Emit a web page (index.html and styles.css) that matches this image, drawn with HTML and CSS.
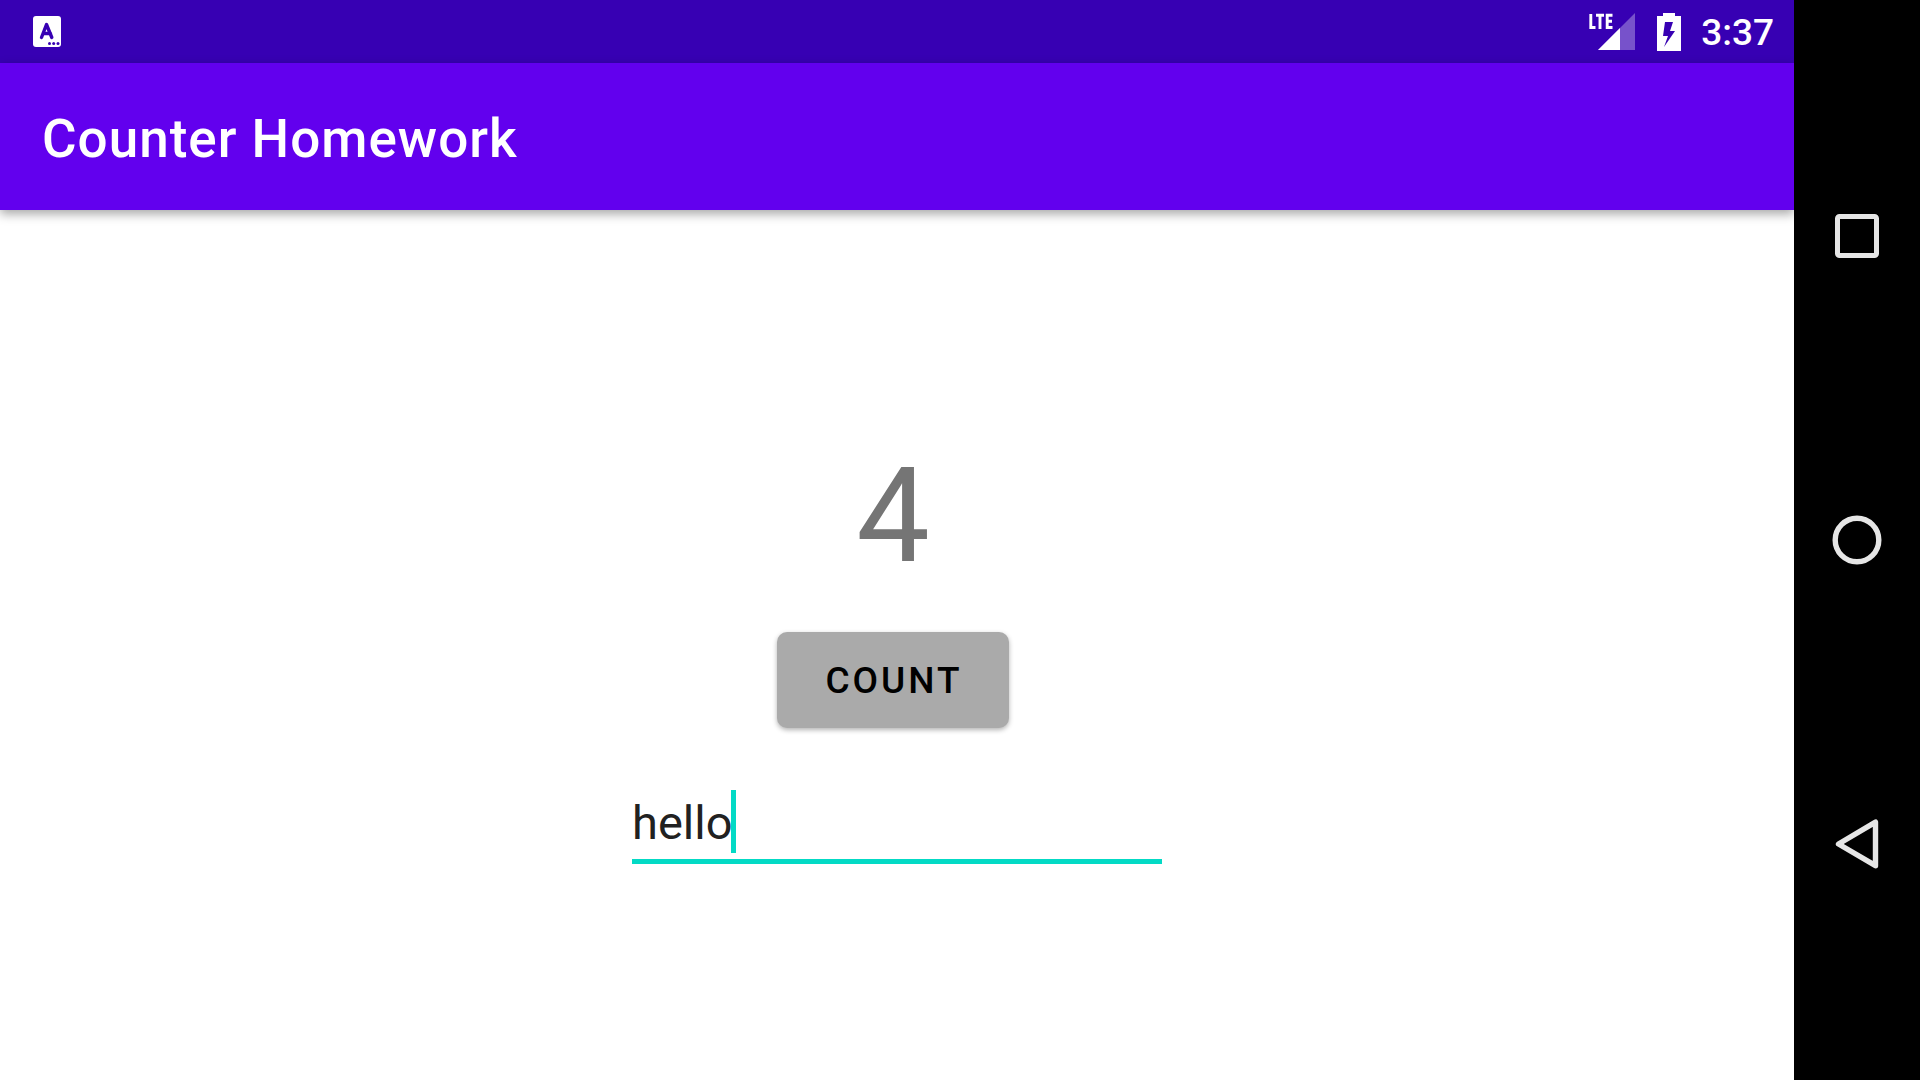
FILE: index.html
```
<!DOCTYPE html>
<html lang="en">
<head>
<meta charset="utf-8">
<title>Counter Homework</title>
<link rel="stylesheet" href="styles.css">
</head>
<body>
<div class="app">
  <div class="status-bar">
    <svg class="notification" width="30" height="32" viewBox="0 0 30 32" aria-hidden="true">
      <rect x="1" y="0" width="28" height="31" rx="3" fill="#fff"/>
      <path d="M9.500 21.500 14.500 8.500 19.800 21.500M11 17.500h7.500" fill="none" stroke="#3700b3" stroke-width="3.400" stroke-linecap="round" stroke-linejoin="round"/>
      <g fill="#3700b3"><circle cx="17.500" cy="27.500" r="1.500"/><circle cx="21.700" cy="27.500" r="1.500"/><circle cx="26" cy="27.500" r="1.500"/></g>
    </svg>
    <div class="indicators">
      <svg width="48" height="38" viewBox="0 0 48 38" role="img" aria-label="LTE signal">
        <path d="M46 0V37H9Z" fill="#fff" opacity=".32"/>
        <path d="M31 15V37H9Z" fill="#fff"/>
        <path d="M1.800 1V14.500H6.500M7 2.300H15M11 2.300V16M23.500 2.300H18.200V14.500H23.500M18.200 8.200H23" fill="none" stroke="#fff" stroke-width="2.900"/>
      </svg>
      <svg width="24" height="38" viewBox="0 0 24 38" role="img" aria-label="Battery charging">
        <path fill="#fff" fill-rule="evenodd" d="M6 0H18V3H24V38H0V3H6ZM8 9 6 23H11L7 34 18 18H13L16 9Z"/>
      </svg>
      <span class="clock">3:37</span>
    </div>
  </div>
  <header class="app-bar"><h1 class="title">Counter Homework</h1></header>
  <main class="content">
    <div class="counter">
      <output class="value" for="count">4</output>
      <button class="count" id="count" type="button">COUNT</button>
    </div>
    <div class="field">
      <input class="text" type="text" value="hello" aria-label="Message">
      <span class="caret"></span>
    </div>
  </main>
</div>
<nav class="nav-bar" aria-label="System navigation">
  <button class="nav-button" type="button" aria-label="Recent apps">
    <svg width="50" height="50" viewBox="0 0 50 50"><rect x="5.500" y="5.500" width="39" height="39" rx="2" fill="none" stroke="#e6e6e6" stroke-width="5"/></svg>
  </button>
  <button class="nav-button" type="button" aria-label="Home">
    <svg width="50" height="50" viewBox="0 0 50 50"><circle cx="25" cy="25" r="21.800" fill="none" stroke="#e6e6e6" stroke-width="5.400"/></svg>
  </button>
  <button class="nav-button" type="button" aria-label="Back">
    <svg width="50" height="50" viewBox="0 0 50 50"><path d="M43.500 3.200V46.700L6.500 25Z" fill="none" stroke="#e6e6e6" stroke-width="5.400" stroke-linejoin="round"/></svg>
  </button>
</nav>
</body>
</html>
```
FILE: styles.css
```
* {
  box-sizing: border-box;
}

body {
  margin: 0;
  min-height: 100vh;
  display: flex;
  background: #fff;
  font-family: Roboto, sans-serif;
}

button,
input {
  margin: 0;
  border: 0;
  font-family: inherit;
}

svg {
  display: block;
}

.app {
  flex: 1;
  display: flex;
  flex-direction: column;
}

.status-bar {
  display: flex;
  justify-content: space-between;
  align-items: center;
  height: 63px;
  padding: 0 20px 0 32px;
  background: #3700b3;
  color: #fff;
}

.indicators {
  display: flex;
  align-items: center;
  gap: 20px;
}

.clock {
  padding-top: 2px;
  font-size: 37px;
  line-height: 44px;
  font-weight: 500;
}

.app-bar {
  display: flex;
  align-items: center;
  height: 147px;
  padding: 4px 42px 0;
  background: #6200ee;
  box-shadow: 0 4px 10px rgba(0, 0, 0, 0.35);
  color: #fff;
}

.title {
  margin: 0;
  font-size: 53px;
  line-height: 64px;
  font-weight: 500;
  letter-spacing: 1px;
}

.content {
  flex: 1;
  display: flex;
  flex-direction: column;
  align-items: center;
  justify-content: center;
  gap: 48px;
  padding-top: 2px;
}

.counter {
  display: flex;
  flex-direction: column;
  align-items: center;
  gap: 28px;
  padding-right: 8px;
}

.value {
  font-size: 131px;
  line-height: 176px;
  color: #757575;
}

.count {
  height: 96px;
  padding: 0 46px 0 48px;
  border-radius: 10px;
  background: #aaa;
  box-shadow: 0 2px 5px rgba(0, 0, 0, 0.3);
  color: #000;
  font-size: 37px;
  font-weight: 500;
  letter-spacing: 3px;
}

.field {
  position: relative;
  width: 530px;
}

.text {
  display: block;
  width: 100%;
  height: 88px;
  padding: 10px 0 0;
  border-bottom: 5px solid #03dac5;
  background: none;
  color: #212121;
  font-size: 47px;
  outline: 0;
}

.caret {
  position: absolute;
  left: 99px;
  bottom: 11px;
  width: 5px;
  height: 63px;
  background: #03dac5;
}

.nav-bar {
  display: flex;
  flex-direction: column;
  justify-content: center;
  width: 126px;
  gap: 34px;
  background: #000;
}

.nav-button {
  display: flex;
  align-items: center;
  justify-content: center;
  height: 270px;
  padding: 0;
  background: none;
}
```
